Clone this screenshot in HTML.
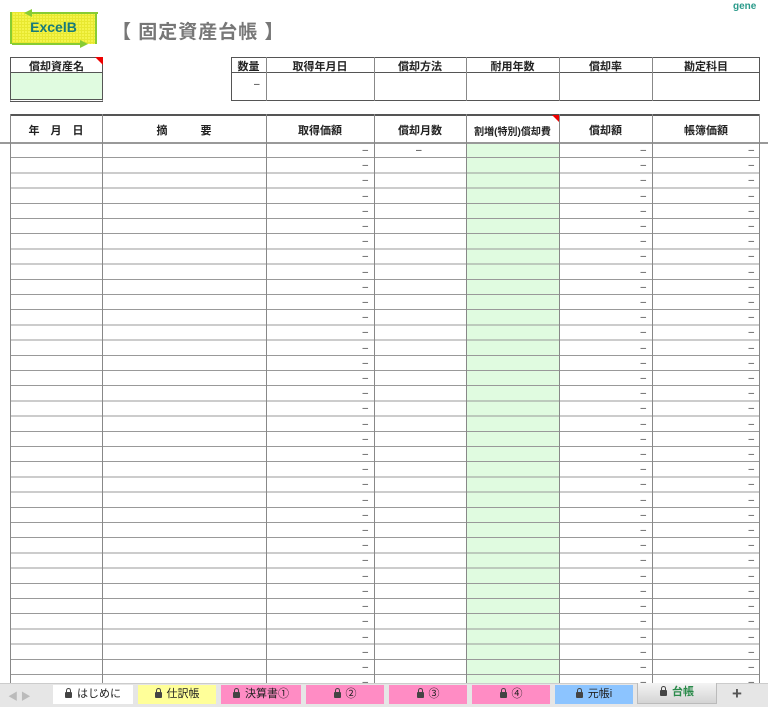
<!DOCTYPE html>
<html><head><meta charset="utf-8"><style>
*{margin:0;padding:0;box-sizing:border-box}
body{width:768px;height:707px;position:relative;overflow:hidden;background:#fff;font-family:"Liberation Sans","Noto Sans CJK JP",sans-serif;color:#222}
.a{position:absolute}
.h{font-size:11px;font-weight:bold;text-align:center;color:#222}
.vl{position:absolute;width:1px;background:#888}
.dash{position:absolute;font-size:10px;line-height:15.2px;text-align:right;color:#333}
.tab{position:absolute;top:685px;height:19px;font-size:11px;line-height:19px;text-align:center;color:#222}
.lk{display:inline-block;width:7px;height:6px;background:#444;border-radius:1px;position:relative;margin-right:5px;vertical-align:-1px}
.lk:before{content:"";position:absolute;left:1px;top:-4px;width:3px;height:4px;border:1px solid #444;border-bottom:none;border-radius:3px 3px 0 0}
</style></head><body>
<div class="a" style="left:10px;top:12px;width:87px;height:32px;background:#f4f44a;background-image:linear-gradient(#e8e830 1px,transparent 1px),linear-gradient(90deg,#e8e830 1px,transparent 1px);background-size:3px 3px;border-left:2px solid #8c3;border-right:2px solid #8c3"></div>
<svg class="a" style="left:10px;top:8px" width="90" height="40"><path d="M20 5 L88 5" stroke="#8c3" stroke-width="2"/><path d="M14 5 L22 1 L22 9Z" fill="#8c3"/><path d="M2 36 L70 36" stroke="#8c3" stroke-width="2"/><path d="M78 36 L70 32 L70 40Z" fill="#8c3"/></svg>
<div class="a" style="left:10px;top:19px;width:87px;text-align:center;font-size:14px;font-weight:bold;color:#187a7a">ExcelB</div>
<div class="a" style="left:112px;top:17px;font-size:19px;color:#777;font-weight:bold;letter-spacing:1px">【 固定資産台帳 】</div>
<div class="a" style="left:733px;top:1px;font-size:10px;font-weight:bold;color:#2a9a8a">gene</div>
<div class="a" style="left:10px;top:57px;width:93px;height:45px;border:1px solid #555;border-bottom:3px double #555"></div>
<div class="a" style="left:11px;top:72px;width:91px;height:27px;background:#e0fbe0;border-top:1px solid #555"></div>
<div class="a h" style="left:10px;top:58px;width:93px">償却資産名</div>
<svg class="a" style="left:95px;top:57px" width="8" height="8"><path d="M0 0H8V8Z" fill="#e00"/></svg>
<div class="a" style="left:231px;top:57px;width:529px;height:44px;border:1px solid #555"></div>
<div class="a" style="left:231px;top:72px;width:529px;height:1px;background:#555"></div>
<div class="vl" style="left:266px;top:57px;height:44px"></div>
<div class="vl" style="left:374px;top:57px;height:44px"></div>
<div class="vl" style="left:466px;top:57px;height:44px"></div>
<div class="vl" style="left:559px;top:57px;height:44px"></div>
<div class="vl" style="left:652px;top:57px;height:44px"></div>
<div class="a h" style="left:231px;top:58px;width:35px">数量</div>
<div class="a h" style="left:266px;top:58px;width:108px">取得年月日</div>
<div class="a h" style="left:374px;top:58px;width:92px">償却方法</div>
<div class="a h" style="left:466px;top:58px;width:93px">耐用年数</div>
<div class="a h" style="left:559px;top:58px;width:93px">償却率</div>
<div class="a h" style="left:652px;top:58px;width:108px">勘定科目</div>
<div class="a" style="left:254px;top:79px;font-size:10px">–</div>
<div class="a" style="left:467px;top:143px;width:92px;height:541px;background:#e0fbe0"></div>
<div class="a" style="left:10px;top:143px;width:750px;height:541px;background:repeating-linear-gradient(to bottom,transparent 0,transparent 14.2px,#999 14.2px,#999 15.2px)"></div>
<div class="a" style="left:10px;top:114px;width:750px;height:2px;background:#555"></div>
<div class="a" style="left:0px;top:142px;width:768px;height:2px;background:#999"></div>
<div class="vl" style="left:10px;top:114px;height:570px"></div>
<div class="vl" style="left:102px;top:114px;height:570px"></div>
<div class="vl" style="left:266px;top:114px;height:570px"></div>
<div class="vl" style="left:374px;top:114px;height:570px"></div>
<div class="vl" style="left:466px;top:114px;height:570px"></div>
<div class="vl" style="left:559px;top:114px;height:570px"></div>
<div class="vl" style="left:652px;top:114px;height:570px"></div>
<div class="vl" style="left:759px;top:114px;height:570px"></div>
<div class="a h" style="left:10px;top:122px;width:92px;word-spacing:8px">年 月 日</div>
<div class="a h" style="left:102px;top:122px;width:164px;word-spacing:30px">摘 要</div>
<div class="a h" style="left:266px;top:122px;width:108px">取得価額</div>
<div class="a h" style="left:374px;top:122px;width:92px">償却月数</div>
<div class="a" style="left:466px;top:123px;width:93px;font-size:10px;text-align:center;font-weight:bold">割増(特別)償却費</div>
<svg class="a" style="left:552px;top:115px" width="7" height="7"><path d="M0 0H7V7Z" fill="#e00"/></svg>
<div class="a h" style="left:559px;top:122px;width:93px">償却額</div>
<div class="a h" style="left:652px;top:122px;width:108px">帳簿価額</div>
<div class="a" style="left:416px;top:143px;font-size:10px;line-height:15.2px">–</div>
<div class="dash" style="left:266px;top:143px;width:102px">–<br>–<br>–<br>–<br>–<br>–<br>–<br>–<br>–<br>–<br>–<br>–<br>–<br>–<br>–<br>–<br>–<br>–<br>–<br>–<br>–<br>–<br>–<br>–<br>–<br>–<br>–<br>–<br>–<br>–<br>–<br>–<br>–<br>–<br>–<br>–</div>
<div class="dash" style="left:559px;top:143px;width:87px">–<br>–<br>–<br>–<br>–<br>–<br>–<br>–<br>–<br>–<br>–<br>–<br>–<br>–<br>–<br>–<br>–<br>–<br>–<br>–<br>–<br>–<br>–<br>–<br>–<br>–<br>–<br>–<br>–<br>–<br>–<br>–<br>–<br>–<br>–<br>–</div>
<div class="dash" style="left:652px;top:143px;width:102px">–<br>–<br>–<br>–<br>–<br>–<br>–<br>–<br>–<br>–<br>–<br>–<br>–<br>–<br>–<br>–<br>–<br>–<br>–<br>–<br>–<br>–<br>–<br>–<br>–<br>–<br>–<br>–<br>–<br>–<br>–<br>–<br>–<br>–<br>–<br>–</div>
<div class="a" style="left:0;top:683px;width:768px;height:24px;background:#e6e6e6;border-top:1px solid #ccc"></div>
<div class="a" style="left:8px;top:688px;font-size:10px;color:#bbb">◀ ▶</div>
<div class="tab" style="left:53px;width:80px;background:#fff"><span class="lk"></span>はじめに</div>
<div class="tab" style="left:138px;width:78px;background:#ffff99"><span class="lk"></span>仕訳帳</div>
<div class="tab" style="left:221px;width:80px;background:#ff8cc4"><span class="lk"></span>決算書①</div>
<div class="tab" style="left:306px;width:78px;background:#ff8cc4"><span class="lk"></span>②</div>
<div class="tab" style="left:389px;width:78px;background:#ff8cc4"><span class="lk"></span>③</div>
<div class="tab" style="left:472px;width:78px;background:#ff8cc4"><span class="lk"></span>④</div>
<div class="tab" style="left:555px;width:78px;background:#8cc4ff"><span class="lk"></span>元帳i</div>
<div class="tab" style="left:637px;top:683px;height:21px;width:80px;background:linear-gradient(#f4f4f4,#d4d4d4);border:1px solid #bbb;border-top:none;color:#2a8a4a;font-weight:bold"><span class="lk"></span>台帳</div>
<div class="a" style="left:722px;top:685px;width:30px;height:19px;text-align:center;font-size:17px;font-weight:bold;line-height:18px;color:#555">+</div>
</body></html>
